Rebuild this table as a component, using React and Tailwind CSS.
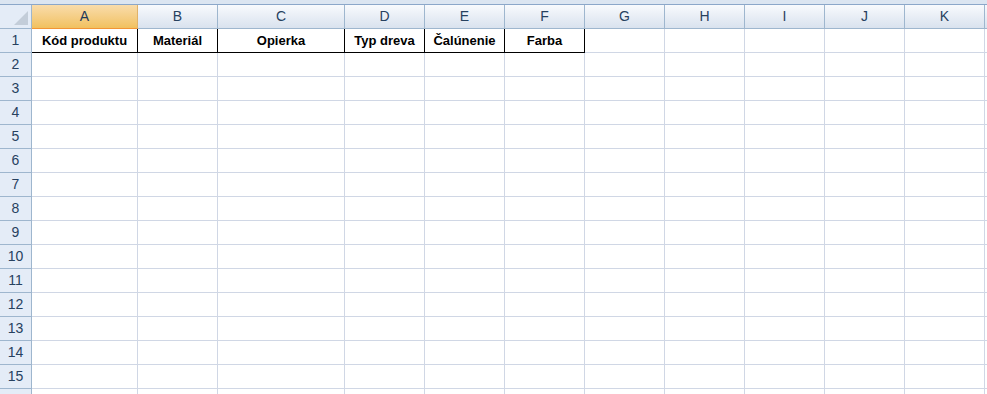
import React from "react";

const cols = [
  { k: "A", w: "w-[106px]" },
  { k: "B", w: "w-[80px]" },
  { k: "C", w: "w-[127px]" },
  { k: "D", w: "w-[80px]" },
  { k: "E", w: "w-[80px]" },
  { k: "F", w: "w-[80px]" },
  { k: "G", w: "w-[80px]" },
  { k: "H", w: "w-[80px]" },
  { k: "I", w: "w-[80px]" },
  { k: "J", w: "w-[80px]" },
  { k: "K", w: "w-[80px]" },
];

const headers = ["Kód produktu", "Materiál", "Opierka", "Typ dreva", "Čalúnenie", "Farba"];

// row 16 is only partly visible at the bottom, its number is hidden
const rows = Array.from({ length: 16 }, (_, i) => i + 1);

const App = () => {
  return (
    <div className="w-[987px] h-[394px] overflow-hidden bg-white font-['Liberation_Sans',Arial,sans-serif]">
      {/* top strip */}
      <div className="h-[5px] bg-[#dbe5f1] border-b border-[#8ba7c9]" />

      {/* column headers */}
      <div className="flex h-[24px]">
        <div className="w-[32px] shrink-0 relative bg-[#e4ecf7] border-r border-b border-[#9eb6ce]">
          <div className="absolute right-[3px] bottom-[3px] w-0 h-0 border-l-[14px] border-l-transparent border-b-[14px] border-b-[#c3cdd9]" />
        </div>
        {cols.map((c) =>
          c.k === "A" ? (
            <div
              key={c.k}
              className={`${c.w} shrink-0 flex items-center justify-center text-[14px] text-[#1e395b] bg-gradient-to-b from-[#f9dcaa] to-[#f1c15f] border-r border-r-[#e0b26a] border-b border-b-[#f29536]`}
            >
              {c.k}
            </div>
          ) : (
            <div
              key={c.k}
              className={`${c.w} shrink-0 flex items-center justify-center text-[14px] text-[#27415f] bg-gradient-to-b from-[#f8fafd] to-[#d9e2ee] border-r border-b border-[#9eb6ce]`}
            >
              {c.k}
            </div>
          )
        )}
        <div className="flex-1 bg-gradient-to-b from-[#f8fafd] to-[#d9e2ee] border-b border-[#9eb6ce]" />
      </div>

      {/* rows */}
      {rows.map((r) => (
        <div key={r} className="flex h-[24px]">
          <div className="w-[32px] shrink-0 flex items-center justify-center text-[14px] text-[#27415f] bg-[#e4ecf7] border-r border-b border-[#9eb6ce]">
            {r < 16 ? r : ""}
          </div>
          {cols.map((c, i) => {
            const head = r === 1 && i < headers.length;
            return (
              <div
                key={c.k}
                className={`${c.w} shrink-0 flex items-center justify-center text-[13px] font-bold text-black border-r border-b ${
                  head ? "border-black" : "border-[#d0d7e5]"
                }`}
              >
                {head ? headers[i] : ""}
              </div>
            );
          })}
          <div className="flex-1 border-b border-[#d0d7e5]" />
        </div>
      ))}
    </div>
  );
};

export default App;
